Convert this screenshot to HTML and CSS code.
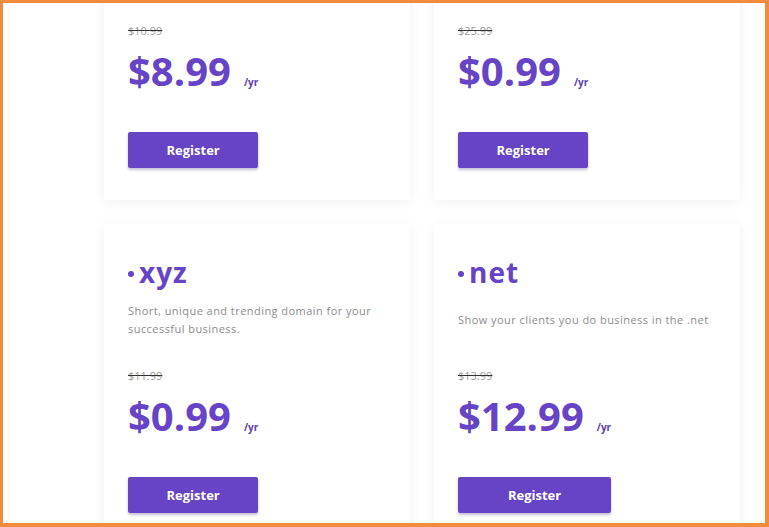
FILE: index.html
```html
<!DOCTYPE html>
<html lang="en">
<head>
<meta charset="utf-8">
<title>Domains</title>
<link rel="stylesheet" href="styles.css">
</head>
<body>
<div class="frame">
  <div class="grid">
    <div class="card card-cut">
      <div class="buy">
        <span class="old">$10.99</span>
        <div class="price-line"><span class="price">$8.99</span><span class="per">/yr</span></div>
        <a class="btn" href="#">Register</a>
      </div>
    </div>
    <div class="card card-cut">
      <div class="buy">
        <span class="old">$25.99</span>
        <div class="price-line"><span class="price">$0.99</span><span class="per">/yr</span></div>
        <a class="btn" href="#">Register</a>
      </div>
    </div>
    <div class="card">
      <h3 class="tld"><span class="dot"></span>xyz</h3>
      <div class="desc"><p>Short, unique and trending domain for your successful business.</p></div>
      <div class="buy">
        <span class="old">$11.99</span>
        <div class="price-line"><span class="price">$0.99</span><span class="per">/yr</span></div>
        <a class="btn" href="#">Register</a>
      </div>
    </div>
    <div class="card">
      <h3 class="tld"><span class="dot"></span>net</h3>
      <div class="desc"><p>Show your clients you do business in the .net</p></div>
      <div class="buy">
        <span class="old">$13.99</span>
        <div class="price-line"><span class="price">$12.99</span><span class="per">/yr</span></div>
        <a class="btn" href="#">Register</a>
      </div>
    </div>
  </div>
</div>
</body>
</html>
```
FILE: styles.css
```css
* { box-sizing: border-box; }
html, body { margin: 0; padding: 0; background: #fff; }
body { font-family: "Open Sans", "Noto Sans", sans-serif; }

.frame {
  width: 769px;
  height: 527px;
  border-style: solid;
  border-color: #f28b3b;
  border-width: 3px 4px 4px 3px;
  overflow: hidden;
  background: #fff;
}

.grid {
  display: grid;
  grid-template-columns: 306px 306px;
  column-gap: 24px;
  row-gap: 24px;
  margin-top: -44px;
  margin-left: 101px;
}

.card {
  background: #fff;
  box-shadow: 0 2px 12px rgba(0, 0, 0, 0.06);
  padding: 32px 24px 32px 24px;
}
.card-cut {
  padding-top: 59px;
}

.tld {
  margin: 0;
  display: flex;
  align-items: center;
  gap: 5px;
  font-size: 28px;
  line-height: 32px;
  font-weight: 700;
  color: #6743c6;
  letter-spacing: 1px;
}
.dot {
  width: 6px;
  height: 6px;
  border-radius: 50%;
  background: #6743c6;
  margin-top: 3px;
}

.desc {
  margin-top: 13px;
  height: 36px;
  display: flex;
  align-items: center;
}
.desc p {
  margin: 0;
  font-size: 11px;
  line-height: 18px;
  color: #8c8c8c;
  letter-spacing: 0.45px;
  padding-top: 1px;
}

.buy {
  margin-top: 30px;
  display: inline-flex;
  flex-direction: column;
  align-items: stretch;
}
.card-cut .buy {
  margin-top: 0;
}

.old {
  font-size: 11px;
  line-height: 18px;
  color: #9a9a9a;
  text-decoration: line-through;
  text-decoration-color: #333;
}

.price-line {
  margin-top: 7px;
  display: flex;
  align-items: baseline;
  gap: 13px;
}
.price {
  font-size: 40px;
  line-height: 47px;
  font-weight: 700;
  color: #6743c6;
}
.per {
  font-size: 10px;
  font-weight: 700;
  color: #5a3db0;
}

.btn {
  margin-top: 38px;
  height: 36px;
  display: flex;
  align-items: center;
  justify-content: center;
  background: #6744c6;
  color: #fff;
  font-size: 13px;
  font-weight: 700;
  text-decoration: none;
  border-radius: 2px;
  box-shadow: 0 2px 3px rgba(60, 40, 120, 0.3);
}
```
